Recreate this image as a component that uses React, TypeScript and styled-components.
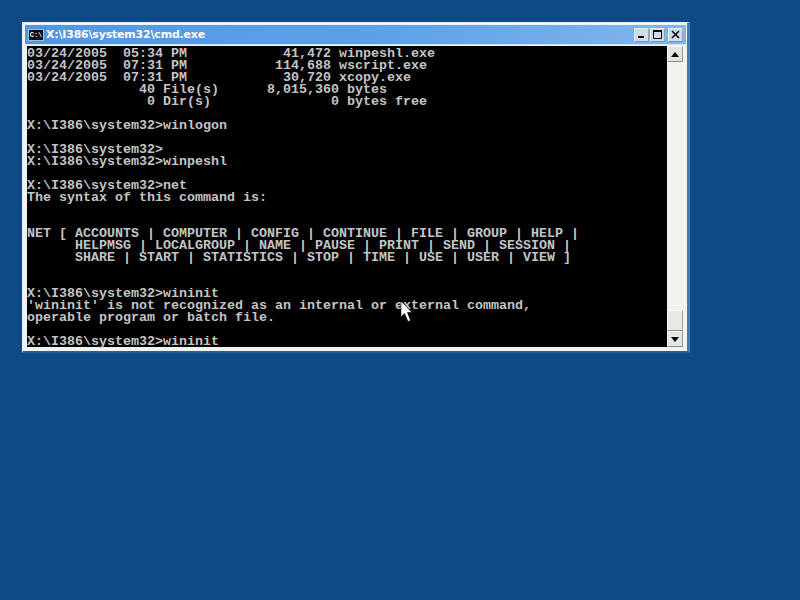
import React from "react";
import styled, { createGlobalStyle } from "styled-components";

const Global = createGlobalStyle`
  html, body { margin: 0; padding: 0; height: 100%; background: #0f4a85; overflow: hidden; }
  #root { height: 100%; }
`;

const Desktop = styled.div`
  position: relative;
  width: 800px;
  height: 600px;
  padding: 22px 0 0 22px;
  box-sizing: border-box;
  background: #0f4a85;
`;

const Window = styled.div`
  width: 668px;
  height: 331px;
  box-sizing: border-box;
  background: #f2f2f0;
  border: 1px solid #e6edf5;
  border-right: 3px solid #3f78bd;
  border-bottom: 2px solid #2a5f9f;
  padding: 2px 4px 4px 4px;
  display: flex;
  flex-direction: column;
`;

const TitleBar = styled.div`
  height: 19px;
  margin: 0 -3px 0 -2px;
  padding: 0 3px 0 3px;
  display: flex;
  align-items: center;
  background: linear-gradient(90deg, #4f97e2 0%, #5ca2e8 55%, #82b6ee 100%);
  border-bottom: 1px solid #d8e4f0;
`;

const AppIcon = styled.span`
  width: 14px;
  height: 10px;
  margin-right: 2px;
  background: #0c0c14;
  border: 1px solid #a8bcd8;
  color: #f0f0f0;
  font: bold 7px/10px "Liberation Mono", monospace;
  text-align: center;
  overflow: hidden;
`;

const Title = styled.span`
  flex: 1;
  color: #ffffff;
  font: bold 11px/16px "DejaVu Sans", sans-serif;
  letter-spacing: -0.2px;
  text-shadow: 0 0 1px #5f8fc8;
`;

const Controls = styled.div`
  display: flex;
  gap: 1px;
`;

const WinButton = styled.button`
  width: 15px;
  height: 14px;
  padding: 0;
  border: 1px solid #e4ecf4;
  border-right-color: #8fa4bc;
  border-bottom-color: #8294ac;
  background: #cfdbe8;
  display: flex;
  align-items: center;
  justify-content: center;
  &:last-child { margin-left: 2px; }
`;

const Body = styled.div`
  flex: 1;
  display: flex;
  min-height: 0;
  margin-top: 1px;
`;

const Console = styled.pre`
  flex: 1;
  margin: 0;
  padding: 2px 0 0 0;
  background: #000;
  color: #c4c4c4;
  font: bold 13.33px/12px "Liberation Mono", monospace;
`;

const ScrollBar = styled.div`
  width: 16px;
  display: flex;
  flex-direction: column;
  background-color: #f2f2ee;
  background-image: radial-gradient(#dcdcd8 0.6px, transparent 0.7px);
  background-size: 2px 2px;
`;

const ScrollArrow = styled.div`
  height: 16px;
  box-sizing: border-box;
  background: #e4e4e0;
  border: 1px solid #f8f8f6;
  border-right-color: #9a9a96;
  border-bottom-color: #8a8a86;
  display: flex;
  align-items: center;
  justify-content: center;
`;

const ScrollTrack = styled.div`
  flex: 1;
`;

const ScrollThumb = styled.div`
  height: 21px;
  box-sizing: border-box;
  background: #e8e8e4;
  border: 1px solid #fafaf8;
  border-right-color: #a0a09c;
  border-bottom-color: #90908c;
`;

const Pointer = styled.svg`
  position: absolute;
  left: 400px;
  top: 300px;
`;

const text = `03/24/2005  05:34 PM            41,472 winpeshl.exe
03/24/2005  07:31 PM           114,688 wscript.exe
03/24/2005  07:31 PM            30,720 xcopy.exe
              40 File(s)      8,015,360 bytes
               0 Dir(s)               0 bytes free

X:\\I386\\system32>winlogon

X:\\I386\\system32>
X:\\I386\\system32>winpeshl

X:\\I386\\system32>net
The syntax of this command is:


NET [ ACCOUNTS | COMPUTER | CONFIG | CONTINUE | FILE | GROUP | HELP |
      HELPMSG | LOCALGROUP | NAME | PAUSE | PRINT | SEND | SESSION |
      SHARE | START | STATISTICS | STOP | TIME | USE | USER | VIEW ]


X:\\I386\\system32>wininit
'wininit' is not recognized as an internal or external command,
operable program or batch file.

X:\\I386\\system32>wininit`;

export default function App() {
  return (
    <Desktop>
      <Global />
      <Window>
        <TitleBar>
          <AppIcon>C:\</AppIcon>
          <Title>X:\I386\system32\cmd.exe</Title>
          <Controls>
            <WinButton aria-label="minimize">
              <svg width="9" height="9" viewBox="0 0 9 9"><rect x="1" y="6" width="6" height="2" fill="#000" /></svg>
            </WinButton>
            <WinButton aria-label="maximize">
              <svg width="9" height="9" viewBox="0 0 9 9"><path d="M0.5 1.5h8v7h-8z" fill="none" stroke="#000" /><rect x="0" y="0" width="9" height="2" fill="#000" /></svg>
            </WinButton>
            <WinButton aria-label="close">
              <svg width="9" height="9" viewBox="0 0 9 9"><path d="M1 1l7 7M8 1l-7 7" stroke="#000" strokeWidth="1.5" /></svg>
            </WinButton>
          </Controls>
        </TitleBar>
        <Body>
          <Console>{text}</Console>
          <ScrollBar>
            <ScrollArrow>
              <svg width="8" height="5" viewBox="0 0 8 5"><path d="M4 0L8 5H0z" fill="#000" /></svg>
            </ScrollArrow>
            <ScrollTrack />
            <ScrollThumb />
            <ScrollArrow>
              <svg width="8" height="5" viewBox="0 0 8 5"><path d="M0 0H8L4 5z" fill="#000" /></svg>
            </ScrollArrow>
          </ScrollBar>
        </Body>
      </Window>
      <Pointer width="13" height="23" viewBox="0 0 13 23">
        <path d="M1 1V17L4.5 13.5L8 21.5L10.5 20.5L7.5 12.5H12z" fill="#fff" stroke="#000" strokeWidth="0.6" />
      </Pointer>
    </Desktop>
  );
}
